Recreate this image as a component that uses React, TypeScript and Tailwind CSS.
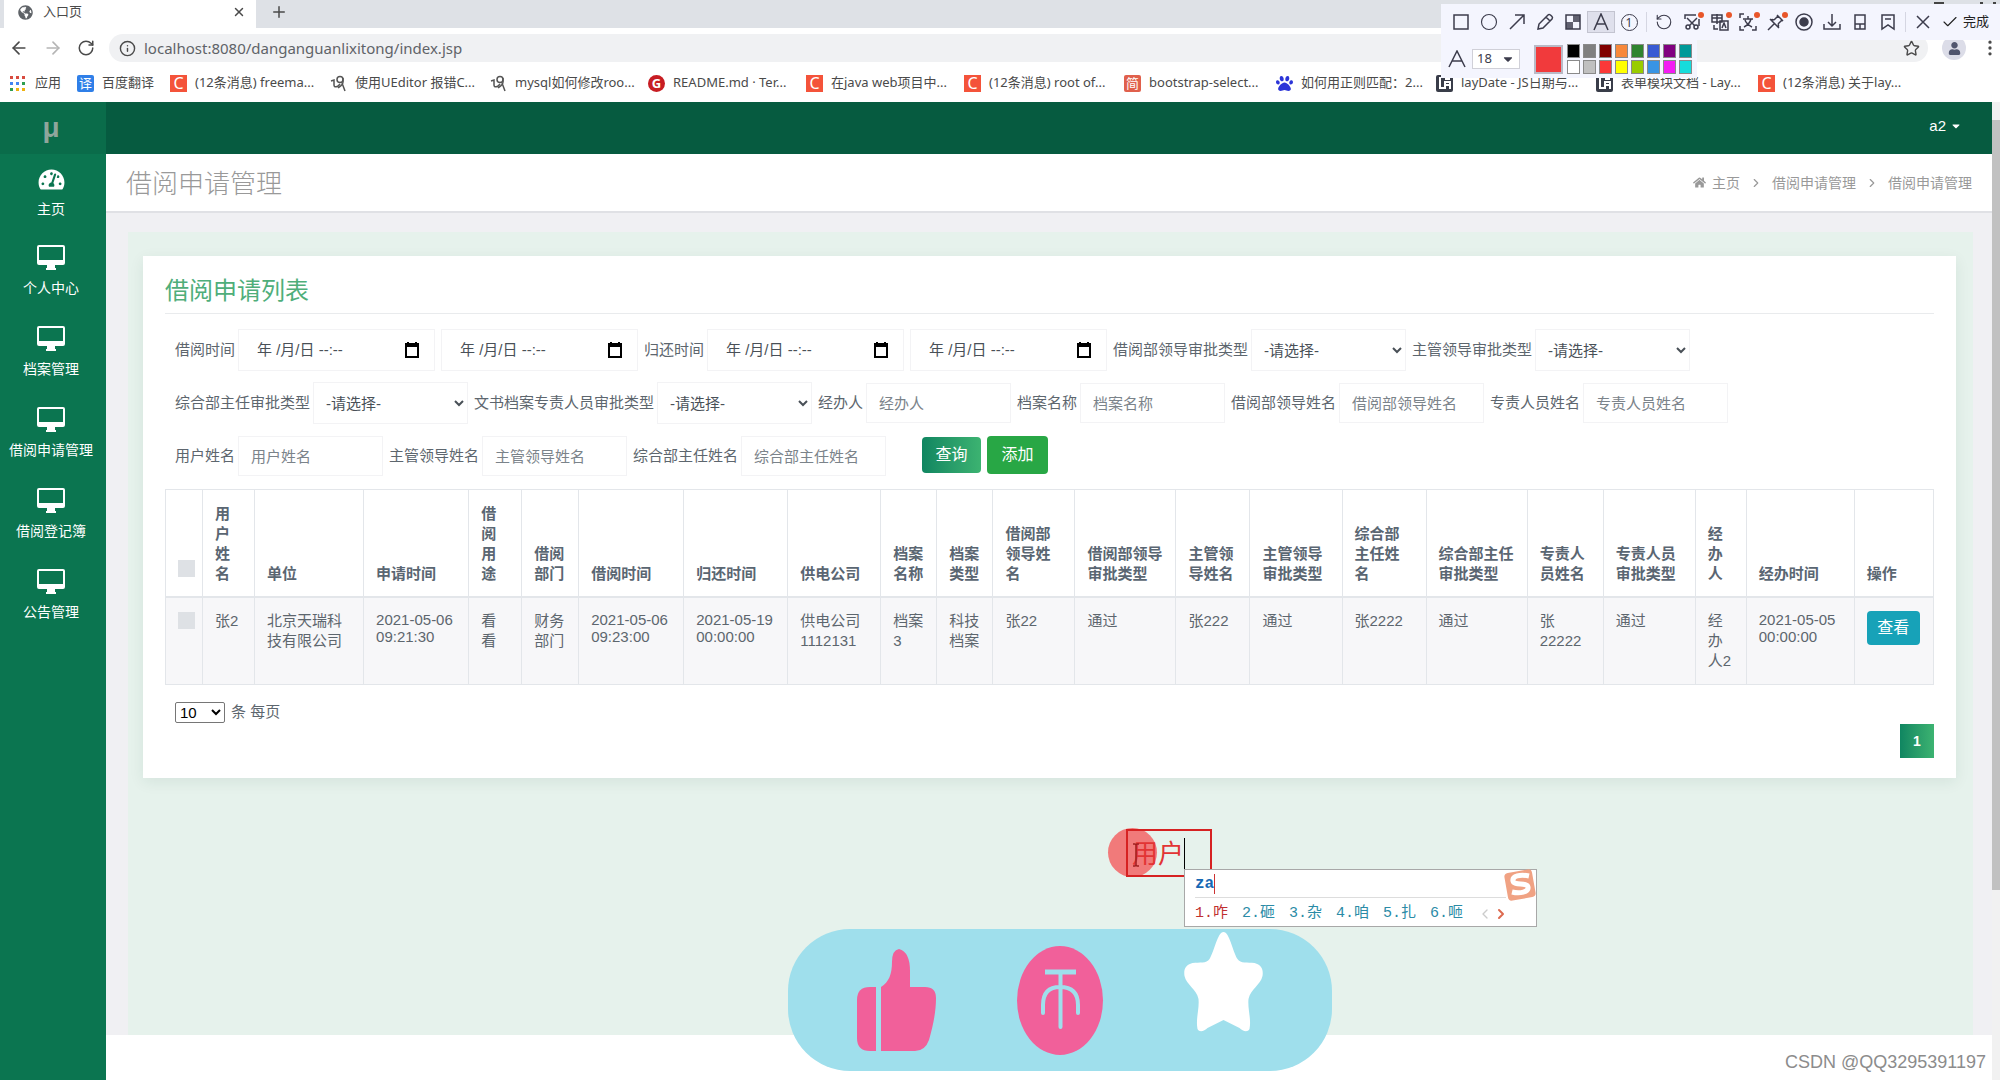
import type { ReactNode } from 'react';
import {
  ArrowLeft, ArrowRight, Info, MoreVertical, Plus, RotateCcw, RotateCw, Star, X, Check, Circle,
  ChevronRight, ChevronLeft,
} from 'lucide-react';
import { FaTachometerAlt, FaHome, FaPaw, FaGlobeAmericas, FaCaretDown, FaUser } from 'react-icons/fa';

type Column = { title: string; width: string; value: string; latin?: boolean };
type Field = { label: string; kind: 'date' | 'select' | 'text'; name: string };
type Bookmark = { text: string; icon: ReactNode; width: string };

const columns: Column[] = [
  { title: '用户姓名', width: 'w-[52px]', value: '张2' },
  { title: '单位', width: 'w-[109px]', value: '北京天瑞科技有限公司' },
  { title: '申请时间', width: 'w-[105px]', value: '2021-05-06 09:21:30', latin: true },
  { title: '借阅用途', width: 'w-[53px]', value: '看看' },
  { title: '借阅部门', width: 'w-[57px]', value: '财务部门' },
  { title: '借阅时间', width: 'w-[105px]', value: '2021-05-06 09:23:00', latin: true },
  { title: '归还时间', width: 'w-[104px]', value: '2021-05-19 00:00:00', latin: true },
  { title: '供电公司', width: 'w-[93px]', value: '供电公司1112131' },
  { title: '档案名称', width: 'w-[56px]', value: '档案3' },
  { title: '档案类型', width: 'w-[56px]', value: '科技档案' },
  { title: '借阅部领导姓名', width: 'w-[82px]', value: '张22' },
  { title: '借阅部领导审批类型', width: 'w-[101px]', value: '通过' },
  { title: '主管领导姓名', width: 'w-[74px]', value: '张222' },
  { title: '主管领导审批类型', width: 'w-[92px]', value: '通过' },
  { title: '综合部主任姓名', width: 'w-[84px]', value: '张2222' },
  { title: '综合部主任审批类型', width: 'w-[101px]', value: '通过' },
  { title: '专责人员姓名', width: 'w-[76px]', value: '张22222' },
  { title: '专责人员审批类型', width: 'w-[92px]', value: '通过' },
  { title: '经办人', width: 'w-[51px]', value: '经办人2' },
  { title: '经办时间', width: 'w-[108px]', value: '2021-05-05 00:00:00', latin: true },
];

const filterRows: Field[][] = [
  [
    { label: '借阅时间', kind: 'date', name: 'jieyueStart' },
    { label: '', kind: 'date', name: 'jieyueEnd' },
    { label: '归还时间', kind: 'date', name: 'guihuanStart' },
    { label: '', kind: 'date', name: 'guihuanEnd' },
    { label: '借阅部领导审批类型', kind: 'select', name: 'jieyuebuTypes' },
    { label: '主管领导审批类型', kind: 'select', name: 'zhuguanTypes' },
  ],
  [
    { label: '综合部主任审批类型', kind: 'select', name: 'zonghebuTypes' },
    { label: '文书档案专责人员审批类型', kind: 'select', name: 'wenshuTypes' },
    { label: '经办人', kind: 'text', name: 'jingbanren' },
    { label: '档案名称', kind: 'text', name: 'danganName' },
    { label: '借阅部领导姓名', kind: 'text', name: 'jieyuebuName' },
    { label: '专责人员姓名', kind: 'text', name: 'zhuanzeName' },
  ],
  [
    { label: '用户姓名', kind: 'text', name: 'yonghuName' },
    { label: '主管领导姓名', kind: 'text', name: 'zhuguanName' },
    { label: '综合部主任姓名', kind: 'text', name: 'zonghebuName' },
  ],
];

const menu = ['个人中心', '档案管理', '借阅申请管理', '借阅登记簿', '公告管理'];

const swatches = [
  'bg-[#000000]', 'bg-[#808080]', 'bg-[#800000]', 'bg-[#f7883a]', 'bg-[#308430]', 'bg-[#385ad3]', 'bg-[#800080]', 'bg-[#099]',
  'bg-[#ffffff]', 'bg-[#c0c0c0]', 'bg-[#fb3838]', 'bg-[#ffff00]', 'bg-[#99cc00]', 'bg-[#3894e4]', 'bg-[#f31bf3]', 'bg-[#16dcdc]',
];

const candidates = ['咋', '砸', '杂', '咱', '扎', '咂'];

function Tile({ color, children }: { color: string; children: ReactNode }) {
  return (
    <span className={`w-[17px] h-[17px] shrink-0 flex items-center justify-center text-[13px] leading-none text-white ${color}`}>
      {children}
    </span>
  );
}

const csdn = <Tile color="bg-[#f4533a]"><span className="text-base">C</span></Tile>;

const inkIcon = (
  <svg viewBox="0 0 17 17" className="w-[17px] h-[17px]" fill="none" stroke="#555" strokeWidth="1.5">
    <path d="M1 6l3-1v5c0 3 4 2 6-1" />
    <circle cx="10" cy="4.500" r="3" />
    <path d="M13 3v4c0 3-2 4-5 6M12 8l3 8" />
  </svg>
);

const layuiIcon = (
  <Tile color="bg-[#393d49] rounded-xs">
    <svg viewBox="0 0 17 17" className="w-full h-full" fill="none" stroke="#fff" strokeWidth="2">
      <path d="M4 2v11h4M9 14V7h5v7M9 4h5M9 10h5" />
    </svg>
  </Tile>
);

const bookmarks: Bookmark[] = [
  { text: '(12条消息) freema...', icon: csdn, width: 'w-[160px]' },
  { text: '使用UEditor 报错C...', icon: inkIcon, width: 'w-[160px]' },
  { text: 'mysql如何修改roo...', icon: inkIcon, width: 'w-[158px]' },
  { text: 'README.md · Ter...', icon: <Tile color="bg-[#c71d23] rounded-full"><b>G</b></Tile>, width: 'w-[158px]' },
  { text: '在java web项目中...', icon: csdn, width: 'w-[158px]' },
  { text: '(12条消息) root of...', icon: csdn, width: 'w-[160px]' },
  { text: 'bootstrap-select...', icon: <Tile color="bg-[#e0604c] rounded-xs">简</Tile>, width: 'w-[152px]' },
  { text: '如何用正则匹配：2...', icon: <FaPaw size={17} className="text-[#2c35d8]" />, width: 'w-[160px]' },
  { text: 'layDate - JS日期与...', icon: layuiIcon, width: 'w-[160px]' },
  { text: '表单模块文档 - Lay...', icon: layuiIcon, width: 'w-[162px]' },
  { text: '(12条消息) 关于lay...', icon: csdn, width: 'w-[160px]' },
];

function BrowserChrome() {
  return (
    <header className="bg-white text-[#4a4a4a] font-['Noto_Sans','Noto_Sans_CJK_SC',sans-serif]">
      <div className="h-7 bg-[#dee1e6] flex">
        <div className="w-1 bg-[#dee1e6]" />
        <div className="w-[252px] bg-white flex items-center pl-3.5 pr-2.5 pb-1">
          <FaGlobeAmericas className="text-[15px] text-[#5f6368]" />
          <span className="ml-2.5 text-[13px] flex-1">入口页</span>
          <button aria-label="关闭标签页"><X size={14} strokeWidth={2.5} /></button>
        </div>
        <button aria-label="新标签页" className="ml-3.5 pb-1"><Plus size={18} /></button>
        <div className="flex-1 h-1 flex justify-end gap-9 pr-1 pt-0.5">
          <button aria-label="最小化" className="w-2.5 h-0.5 bg-[#444]" />
          <button aria-label="关闭" className="w-4 h-0.5 border-x-3 border-[#444]" />
        </div>
      </div>
      <div className="h-10 flex items-center">
        <button aria-label="后退" className="ml-[9px]"><ArrowLeft size={20} /></button>
        <button aria-label="前进" className="ml-3.5 text-[#b5b5b5]"><ArrowRight size={20} /></button>
        <button aria-label="刷新" className="ml-3.5"><RotateCw size={18} /></button>
        <div className="ml-3.5 mr-3.5 h-7 flex-1 rounded-full bg-[#f0f1f3] flex items-center pl-2.5 pr-2">
          <Info size={17} />
          <input
            aria-label="地址"
            readOnly
            value="localhost:8080/danganguanlixitong/index.jsp"
            className="ml-2 flex-1 bg-transparent outline-none text-[15px] text-[#5f6368]"
          />
          <button aria-label="收藏"><Star size={17} /></button>
        </div>
        <button aria-label="用户" className="w-6 h-6 rounded-full bg-[#dcdde8] flex items-center justify-center text-[#51566e]">
          <FaUser size={13} />
        </button>
        <button aria-label="菜单" className="ml-3.5"><MoreVertical size={20} /></button>
      </div>
      <nav className="h-[34px] pb-1 flex items-center text-[13px] whitespace-nowrap overflow-hidden">
        <a href="#apps" className="ml-2.5 flex items-center gap-2.5">
          <svg viewBox="0 0 15 15" className="w-[15px] h-[15px]">
            <path fill="#d84b40" d="M0 0h3v3H0zM6 0h3v3H6zM12 0h3v3h-3z" />
            <path fill="#4285f4" d="M0 6h3v3H0zM6 6h3v3H6z" />
            <path fill="#2e9e50" d="M0 12h3v3H0zM12 6h3v3h-3z" />
            <path fill="#eeb211" d="M6 12h3v3H6zM12 12h3v3h-3z" />
          </svg>
          应用
        </a>
        <a href="#fanyi" className="ml-4 w-[93px] flex items-center gap-2">
          <Tile color="bg-[#2f7fe8] rounded-xs">译</Tile>
          百度翻译
        </a>
        {bookmarks.map((b, i) => (
          <a key={i} href={`#b${i}`} className={`shrink-0 flex items-center gap-2 ${b.width}`}>
            {b.icon}
            {b.text}
          </a>
        ))}
      </nav>
    </header>
  );
}

function Tool({ label, dot, active, children }: { label: string; dot?: boolean; active?: boolean; children: ReactNode }) {
  return (
    <button
      aria-label={label}
      className={`relative w-7 flex items-center justify-center ${active ? 'h-[22px] bg-[#dfe0ec] border border-[#c3c4d0]' : 'h-7'}`}
    >
      {children}
      {dot && <span className="absolute top-1 right-0.5 w-1.5 h-1.5 rounded-full bg-[#e8562a]" />}
    </button>
  );
}

function Glyph({ children }: { children: ReactNode }) {
  return (
    <svg viewBox="0 0 18 18" className="w-[18px] h-[18px]" fill="none" stroke="currentColor" strokeWidth="1.500">
      {children}
    </svg>
  );
}

function CaptureToolbar() {
  return (
    <div className="absolute top-1 right-0 w-[559px] text-[#3c3c4c] font-['Noto_Sans','Noto_Sans_CJK_SC',sans-serif]">
      <div className="h-9 bg-[#f4f5fe] flex items-center pl-1.5">
        <Tool label="矩形"><Glyph><path d="M2 2h14v14H2z" /></Glyph></Tool>
        <Tool label="椭圆"><Circle size={18} strokeWidth={1.5} /></Tool>
        <Tool label="箭头"><Glyph><path d="M2 16L16 2M7 2h9v9" /></Glyph></Tool>
        <Tool label="画笔"><Glyph><path d="M2 16l1-5 9-9q1-1 2.500 0l1.500 1.500q1 1 0 2.500l-9 9zM10 4l4 4" /></Glyph></Tool>
        <Tool label="马赛克">
          <Glyph>
            <path d="M2 2h14v14H2z" />
            <path fill="currentColor" stroke="none" opacity=".8" d="M9 2h7v7H9zM2 9h7v7H2z" />
          </Glyph>
        </Tool>
        <Tool label="文字" active><Glyph><path d="M2 17L9 1l7 16M5 11h8" /></Glyph></Tool>
        <Tool label="序号">
          <span className="w-[17px] h-[17px] rounded-full border border-current text-[12px] leading-[15px]">1</span>
        </Tool>
        <span className="w-px h-5 mx-[3px] bg-[#d5d6e2]" />
        <Tool label="撤销"><RotateCcw size={18} strokeWidth={1.5} /></Tool>
        <Tool label="裁剪" dot>
          <Glyph>
            <path d="M2 6V2h11M16 6v7M4 5l8 8M14 5l-8 8" />
            <circle cx="5" cy="14" r="2" />
            <circle cx="13" cy="14" r="2" />
          </Glyph>
        </Tool>
        <Tool label="翻译" dot><Glyph><path d="M1 2h10v7H1zM1 5h10M6 1v10M3 12v4h4M9 8h8v9H9zM11 15l2-5 2 5" /></Glyph></Tool>
        <Tool label="识别文字" dot><Glyph><path d="M1 5V1h4M17 13v4h-4M1 13v4h4M4 6h10M9 3v3M12 6c-1 4-3 6-7 8M6 7c1 3 3 5 7 7" /></Glyph></Tool>
        <Tool label="固定" dot><Glyph><path d="M10 2l6 6M11 3L7 7M15 7l-4 4M3 6l9 9M7 7Q5 6 4 7M11 11q1 2 0 3M7 11l-6 6" /></Glyph></Tool>
        <Tool label="录制">
          <Glyph>
            <circle cx="9" cy="9" r="8" />
            <circle cx="9" cy="9" r="4" fill="currentColor" />
          </Glyph>
        </Tool>
        <Tool label="保存"><Glyph><path d="M9 1v11M5 9l4 4 4-4M1 11v5h16v-5" /></Glyph></Tool>
        <Tool label="发送到手机"><Glyph><path d="M4 2h10v14H4zM4 11h10M9 11v5" /></Glyph></Tool>
        <Tool label="收藏截图"><Glyph><path d="M3 2h12v14l-6-4-6 4zM6 6h6" /></Glyph></Tool>
        <span className="w-px h-5 mx-[3px] bg-[#d5d6e2]" />
        <Tool label="取消"><Glyph><path d="M3 3l12 12M15 3L3 15" /></Glyph></Tool>
        <button className="flex items-center ml-1 gap-1 text-[13px] whitespace-nowrap text-[#222]">
          <Check size={18} strokeWidth={1.5} />完成
        </button>
      </div>
      <div className="h-[38px] w-[256px] bg-[#f4f5fe] flex items-center pl-[7px]">
        <Glyph><path d="M1 17L9 1l8 16M4 11h10" /></Glyph>
        <button aria-label="字号" className="ml-1.5 w-12 h-5 bg-white border border-[#d0d0d8] flex items-center justify-between px-1 text-[13px]">
          18 <FaCaretDown size={14} />
        </button>
        <span className="ml-3.5 w-[29px] h-[29px] bg-[#f13a3c] border-2 border-[#b9bac6]" />
        <div className="ml-1 grid grid-cols-8 gap-x-[3px] gap-y-0.5">
          {swatches.map((c) => (
            <button key={c} aria-label="颜色" className={`w-[13px] h-[14px] border border-[#8a8a8a] ${c}`} />
          ))}
        </div>
      </div>
    </div>
  );
}

function MonitorIcon() {
  return (
    <svg viewBox="0 0 28 25" className="w-7 h-[25px]" fill="currentColor">
      <path fillRule="evenodd" d="M2 0h24a2 2 0 0 1 2 2v16a2 2 0 0 1-2 2h-8v3h1v2H9v-2h1v-3H2a2 2 0 0 1-2-2V2a2 2 0 0 1 2-2zm0 2v13h24V2z" />
    </svg>
  );
}

function Sidebar() {
  return (
    <aside className="w-[106px] shrink-0 bg-[#0b7550] text-white text-sm">
      <div className="h-[52px] bg-[#0a6c4a] flex items-center justify-center pr-1 text-[28px] font-bold text-[#8fa69c]">μ</div>
      <nav className="pr-1">
        <a href="#home" className="h-[71px] pt-3.5 flex flex-col items-center">
          <FaTachometerAlt size={27} className="h-[23px]" />
          <span className="mt-2 leading-5">主页</span>
        </a>
        {menu.map((m) => (
          <a key={m} href={`#${m}`} className="h-[81px] pt-5 flex flex-col items-center">
            <MonitorIcon />
            <span className="mt-2 leading-5">{m}</span>
          </a>
        ))}
      </nav>
    </aside>
  );
}

const boxStyle = 'bg-white border border-[#f3f3f5] outline-none text-[15px] text-[#495057]';

function FilterField({ field }: { field: Field }) {
  const { label, kind, name } = field;
  return (
    <div className="flex items-center">
      {label && <label htmlFor={name} className="mr-[3px] whitespace-nowrap">{label}</label>}
      {kind === 'date' && (
        <div className={`w-[197px] h-[42px] flex items-center pl-[18px] pr-3.5 ${boxStyle}`}>
          <input id={name} aria-label={label || '结束时间'} readOnly value="年 /月/日 --:--" className="min-w-0 flex-1 outline-none" />
          <svg viewBox="0 0 16 16" className="w-4 h-4 text-black" fill="currentColor">
            <path fillRule="evenodd" d="M3 0h2v1h6V0h2v1h2v15H1V1h2zM3 5v9h10V5z" />
          </svg>
        </div>
      )}
      {kind === 'select' && (
        <select id={name} className={`w-[155px] h-[42px] pl-2 ${boxStyle}`}>
          <option>-请选择-</option>
        </select>
      )}
      {kind === 'text' && (
        <input id={name} placeholder={label} className={`w-[145px] h-10 px-3 placeholder:text-[#7b838a] ${boxStyle}`} />
      )}
    </div>
  );
}

const cell = 'border border-[#e3e6ea] px-3 text-left';
const check = 'block appearance-none w-[17px] h-[17px] bg-[#dee1e5]';

function RequestTable() {
  return (
    <table className="mt-3 w-full table-fixed border-collapse text-[15px] leading-5 text-[#5d666e]">
      <colgroup>
        <col className="w-[37px]" />
        {columns.map((c) => <col key={c.title} className={c.width} />)}
        <col className="w-[79px]" />
      </colgroup>
      <thead className="text-[#5a6672]">
        <tr className="border-b-2 border-[#e3e6ea]">
          <th className={`${cell} align-bottom pb-[19px]`}><input type="checkbox" aria-label="全选" className={check} /></th>
          {columns.map((c) => (
            <th key={c.title} className={`${cell} pt-3.5 pb-3 align-bottom font-bold`}>{c.title}</th>
          ))}
          <th className={`${cell} pt-3.5 pb-3 align-bottom font-bold`}>操作</th>
        </tr>
      </thead>
      <tbody>
        <tr className="bg-[#f7f7f9] align-top">
          <td className={`${cell} py-3.5`}><input type="checkbox" aria-label="选择" className={check} /></td>
          {columns.map((c) => (
            <td key={c.title} className={`${cell} py-[13px] ${c.latin ? 'leading-[17px]' : ''}`}>{c.value}</td>
          ))}
          <td className={`${cell} py-[13px]`}>
            <button className="h-[34px] w-[53px] rounded-sm bg-[#17a2b8] text-white text-base">查看</button>
          </td>
        </tr>
      </tbody>
    </table>
  );
}

function Content() {
  return (
    <main className="flex-1 min-w-0 flex flex-col bg-[#f0f0f3]">
      <div className="h-[52px] bg-[#065b40] flex items-center justify-end pr-[30px] pb-1 text-white text-[15px]">
        <button className="flex items-center gap-1">a2 <FaCaretDown size={12} /></button>
      </div>
      <div className="h-[59px] bg-white border-b-2 border-[#e0e1e5] flex items-center justify-between pl-5 pr-5 text-[#999]">
        <h1 className="pt-1 text-[26px] font-light">借阅申请管理</h1>
        <nav className="flex items-center gap-[9px] text-sm">
          <a href="#home" className="flex items-center gap-1.5"><FaHome size={13} />主页</a>
          <ChevronRight size={14} />
          <a href="#list">借阅申请管理</a>
          <ChevronRight size={14} />
          <span>借阅申请管理</span>
        </nav>
      </div>
      <div className="flex-1 mt-[19px] ml-[22px] mr-[19px] bg-[#e6f2ec] pt-6 pl-[15px] pr-[17px]">
        <section className="bg-white shadow-[0_4px_14px_rgba(0,60,50,0.08)] px-[22px] pt-[17px] pb-5 text-[15px] text-[#5d666e]">
          <h2 className="pb-1 border-b border-[#e9ebed] text-2xl leading-9 text-[#4fae7a]">借阅申请列表</h2>
          <form className="mt-[15px] pl-2.5 flex flex-col gap-[11px]">
            {filterRows.map((row, i) => (
              <div key={i} className="h-[42px] flex items-center gap-1.5">
                {row.map((f) => <FilterField key={f.name} field={f} />)}
                {i === 2 && (
                  <div className="ml-[30px] mb-0.5 flex items-center gap-1.5 text-white text-base">
                    <button type="button" className="w-[59px] h-9 rounded-sm bg-linear-to-r from-[#0f8661] to-[#3cb371]">查询</button>
                    <button type="button" className="w-[61px] h-[38px] rounded-sm bg-[#28a745]">添加</button>
                  </div>
                )}
              </div>
            ))}
          </form>
          <RequestTable />
          <div className="mt-[17px] pl-2.5 flex items-center gap-1.5 h-5">
            <select id="pageSize" className="w-[50px] h-[21px] border border-[#767676] rounded-xs bg-white text-black">
              <option>10</option>
            </select>
            <label htmlFor="pageSize">条 每页</label>
          </div>
          <div className="mt-0.5 flex justify-end">
            <button className="w-[34px] h-[34px] bg-linear-to-r from-[#0f8661] to-[#3cb371] text-white text-sm font-bold">1</button>
          </div>
        </section>
      </div>
      <footer className="h-[45px] bg-white" />
    </main>
  );
}

function ReactionBar() {
  return (
    <div className="absolute left-[788px] top-[929px] w-[544px] h-[142px] rounded-[62px] bg-[#9fdfec]">
      <svg viewBox="0 0 544 142" className="w-full h-full">
        <g fill="#f1609a">
          <path d="M82 58h6v64h-6q-13 0-13-13V71q0-13 13-13z" />
          <path d="M93 122V58c8-5 11-13 11-25q0-12 7-13 11 3 11 22v16h15q11 0 11 11c0 14-3 28-7 42q-4 11-14 11z" />
          <ellipse cx="272" cy="71.500" rx="43" ry="54.500" />
        </g>
        <g fill="none" stroke="#9fdfec" strokeLinecap="round">
          <path strokeWidth="5" strokeLinecap="butt" d="M257 43h31" />
          <path strokeWidth="4" d="M272.500 44v54M255 84V76q0-18 17-18 18 0 18 18v8" />
        </g>
        <path
          fill="#fff"
          d="M435.500 3c-6 0-9 19-14 27-3 5-10 3-17 4-7 2-9 6-8 13 2 9 12 13 14 23 1 10-3 20-1 30 2 4 7 2 10-1l16-8 16 8c3 3 8 5 10 1 2-10-2-20-1-30 2-10 12-14 14-23 1-7-1-11-8-13-7-1-14 1-17-4-5-8-8-27-14-27z"
        />
      </svg>
    </div>
  );
}

function Annotation() {
  return (
    <>
      <div className="absolute left-[1108px] top-[828px] w-[49px] h-[49px] rounded-full bg-[#f17a7a]" />
      <div className="absolute left-[1126px] top-[829px] w-[86px] h-12 border-2 border-[#d62222] flex items-center pl-1 pt-0.5 text-[26px] text-[#e23434]">
        用户
        <span className="w-px h-8 bg-black" />
        <svg viewBox="0 0 8 24" className="absolute left-1 top-3 w-2 h-6" fill="none" stroke="#a02020" strokeWidth="1.500">
          <path d="M1 1h2l1 1 1-1h2M4 2v20M1 23h2l1-1 1 1h2" />
        </svg>
      </div>
      <div className="absolute left-[1184px] top-[869px] w-[353px] h-[58px] bg-white border border-[#a8a8a8] px-2.5 font-['Liberation_Mono','Noto_Sans_CJK_SC',monospace]">
        <div className="h-7 mr-5 border-b border-[#ddd] flex items-center text-base font-bold text-[#1769b5]">
          za<span className="w-px h-5 bg-[#c33]" />
        </div>
        <div className="h-7 pt-1 flex items-center text-[15px] text-[#2b8ba6] whitespace-nowrap">
          {candidates.map((c, i) => (
            <span key={c} className={`w-[47px] ${i === 0 ? 'text-[#c03030]' : ''}`}>{i + 1}.{c}</span>
          ))}
          <ChevronLeft size={16} className="text-[#ccc]" />
          <ChevronRight size={16} strokeWidth={3} className="text-[#dd6a50]" />
        </div>
        <svg viewBox="0 0 32 32" className="absolute -top-px right-0 w-8 h-8">
          <rect x="2" y="2" width="28" height="28" rx="4" fill="#f0a283" transform="rotate(-10 16 16)" />
          <path d="M25 7C16 5 8 7 9 12s14 1 15 6-8 7-16 5" fill="none" stroke="#fff" strokeWidth="5" />
        </svg>
      </div>
    </>
  );
}

export default function App() {
  return (
    <div className="relative min-h-screen flex flex-col overflow-hidden bg-white font-['Liberation_Sans','Noto_Sans_CJK_SC',sans-serif]">
      <BrowserChrome />
      <div className="flex-1 flex">
        <Sidebar />
        <Content />
        <div className="w-2 bg-[#f1f1f1] pt-[18px]">
          <div className="h-[770px] bg-[#c1c1c1]" />
        </div>
      </div>
      <CaptureToolbar />
      <ReactionBar />
      <Annotation />
      <span className="absolute right-3.5 bottom-1 text-lg text-[#8c8c8c]">CSDN @QQ3295391197</span>
    </div>
  );
}
